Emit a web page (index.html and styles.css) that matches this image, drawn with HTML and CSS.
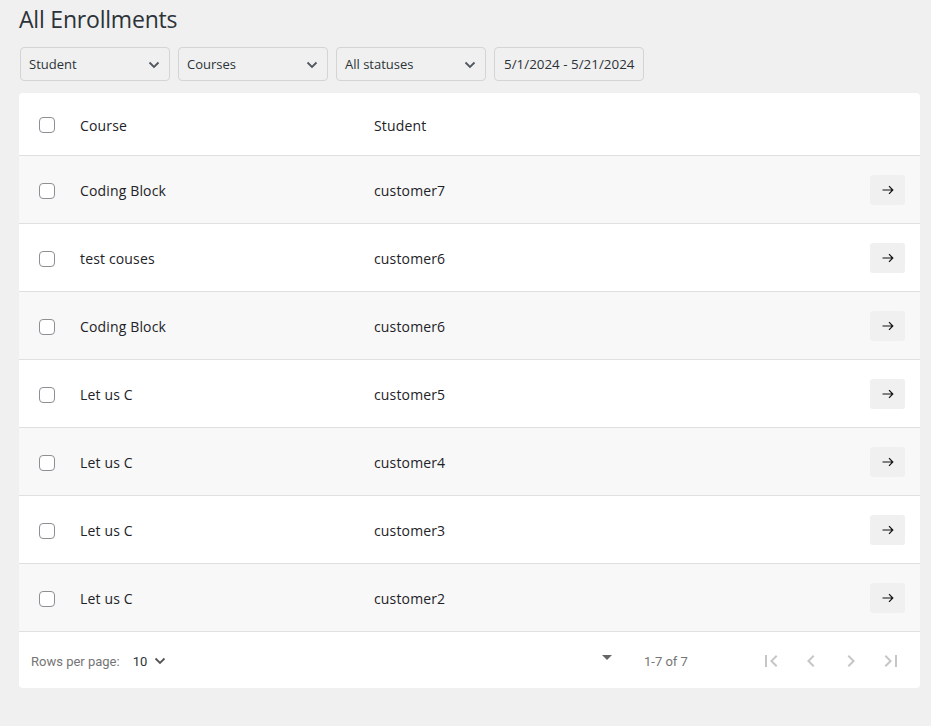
FILE: index.html
```html
<!DOCTYPE html>
<html lang="en">
<head>
<meta charset="utf-8">
<title>All Enrollments</title>
<link rel="stylesheet" href="styles.css">
</head>
<body>
<div class="wrap">
  <h1 class="title">All Enrollments</h1>
  <div class="filters">
    <div class="select"><span>Student</span><svg class="chev" width="12" height="8" viewBox="0 0 12 8"><path d="M1.5 1.5 6 6l4.5-4.5" fill="none" stroke="#50575e" stroke-width="1.8"/></svg></div>
    <div class="select"><span>Courses</span><svg class="chev" width="12" height="8" viewBox="0 0 12 8"><path d="M1.5 1.5 6 6l4.5-4.5" fill="none" stroke="#50575e" stroke-width="1.8"/></svg></div>
    <div class="select"><span>All statuses</span><svg class="chev" width="12" height="8" viewBox="0 0 12 8"><path d="M1.5 1.5 6 6l4.5-4.5" fill="none" stroke="#50575e" stroke-width="1.8"/></svg></div>
    <div class="select date"><span>5/1/2024 - 5/21/2024</span></div>
  </div>

  <div class="card">
    <div class="row head">
      <div class="cell cb"><span class="check"></span></div>
      <div class="cell course">Course</div>
      <div class="cell student">Student</div>
      <div class="cell act"></div>
    </div>
    <div class="row odd">
      <div class="cell cb"><span class="check"></span></div>
      <div class="cell course">Coding Block</div>
      <div class="cell student">customer7</div>
      <div class="cell act"><button class="go"><svg width="12" height="10" viewBox="0 0 12 10"><path d="M0.5 5h10.5M7 1.2 10.8 5 7 8.8" fill="none" stroke="#111" stroke-width="1.2"/></svg></button></div>
    </div>
    <div class="row">
      <div class="cell cb"><span class="check"></span></div>
      <div class="cell course">test couses</div>
      <div class="cell student">customer6</div>
      <div class="cell act"><button class="go"><svg width="12" height="10" viewBox="0 0 12 10"><path d="M0.5 5h10.5M7 1.2 10.8 5 7 8.8" fill="none" stroke="#111" stroke-width="1.2"/></svg></button></div>
    </div>
    <div class="row odd">
      <div class="cell cb"><span class="check"></span></div>
      <div class="cell course">Coding Block</div>
      <div class="cell student">customer6</div>
      <div class="cell act"><button class="go"><svg width="12" height="10" viewBox="0 0 12 10"><path d="M0.5 5h10.5M7 1.2 10.8 5 7 8.8" fill="none" stroke="#111" stroke-width="1.2"/></svg></button></div>
    </div>
    <div class="row">
      <div class="cell cb"><span class="check"></span></div>
      <div class="cell course">Let us C</div>
      <div class="cell student">customer5</div>
      <div class="cell act"><button class="go"><svg width="12" height="10" viewBox="0 0 12 10"><path d="M0.5 5h10.5M7 1.2 10.8 5 7 8.8" fill="none" stroke="#111" stroke-width="1.2"/></svg></button></div>
    </div>
    <div class="row odd">
      <div class="cell cb"><span class="check"></span></div>
      <div class="cell course">Let us C</div>
      <div class="cell student">customer4</div>
      <div class="cell act"><button class="go"><svg width="12" height="10" viewBox="0 0 12 10"><path d="M0.5 5h10.5M7 1.2 10.8 5 7 8.8" fill="none" stroke="#111" stroke-width="1.2"/></svg></button></div>
    </div>
    <div class="row">
      <div class="cell cb"><span class="check"></span></div>
      <div class="cell course">Let us C</div>
      <div class="cell student">customer3</div>
      <div class="cell act"><button class="go"><svg width="12" height="10" viewBox="0 0 12 10"><path d="M0.5 5h10.5M7 1.2 10.8 5 7 8.8" fill="none" stroke="#111" stroke-width="1.2"/></svg></button></div>
    </div>
    <div class="row odd">
      <div class="cell cb"><span class="check"></span></div>
      <div class="cell course">Let us C</div>
      <div class="cell student">customer2</div>
      <div class="cell act"><button class="go"><svg width="12" height="10" viewBox="0 0 12 10"><path d="M0.5 5h10.5M7 1.2 10.8 5 7 8.8" fill="none" stroke="#111" stroke-width="1.2"/></svg></button></div>
    </div>

    <div class="foot">
      <span class="rpp">Rows per page:</span>
      <span class="rpp-sel">10<svg width="12" height="8" viewBox="0 0 12 8"><path d="M1.5 1.5 6 6l4.5-4.5" fill="none" stroke="#555" stroke-width="1.8"/></svg></span>
      <span class="spacer"></span>
      <span class="tri"></span>
      <span class="range">1-7 of 7</span>
      <div class="pager">
        <span class="pbtn"><svg width="24" height="24" viewBox="0 0 24 24"><path d="M18.41 16.59 13.82 12l4.59-4.59L17 6l-6 6 6 6zM6 6h2v12H6z" fill="#c6c6c6"/></svg></span>
        <span class="pbtn"><svg width="24" height="24" viewBox="0 0 24 24"><path d="M15.41 7.41 14 6l-6 6 6 6 1.41-1.41L10.83 12z" fill="#c6c6c6"/></svg></span>
        <span class="pbtn"><svg width="24" height="24" viewBox="0 0 24 24"><path d="M10 6 8.59 7.41 13.17 12l-4.58 4.59L10 18l6-6z" fill="#c6c6c6"/></svg></span>
        <span class="pbtn"><svg width="24" height="24" viewBox="0 0 24 24"><path d="M5.59 7.41 10.18 12l-4.59 4.59L7 18l6-6-6-6zM16 6h2v12h-2z" fill="#c6c6c6"/></svg></span>
      </div>
    </div>
  </div>
</div>
</body>
</html>
```

FILE: styles.css
```css
* { box-sizing: border-box; }

html, body {
  margin: 0;
  padding: 0;
  background: #f0f0f0;
}

body {
  font-family: "Open Sans", "Noto Sans", sans-serif;
  color: #1d2327;
}

.wrap {
  padding: 4px 11px 0 19px;
}

.title {
  margin: 0;
  font-size: 23px;
  font-weight: 400;
  line-height: 30px;
  letter-spacing: -0.2px;
  color: #2c3338;
}

.filters {
  display: flex;
  gap: 8px;
  margin-top: 13px;
  padding-left: 1px;
}

.select {
  width: 150px;
  height: 34px;
  border: 1px solid #d4d4d4;
  border-radius: 4px;
  background: #f0f0f0;
  display: flex;
  align-items: center;
  justify-content: space-between;
  padding: 0 9px 0 8px;
  font-size: 13px;
  color: #2c3338;
}

.select .chev {
  margin-top: 1px;
}

.select.date {
  padding: 0 5px 0 9px;
  font-size: 13.4px;
}

.card {
  margin-top: 12px;
  background: #fff;
  border-radius: 4px;
  overflow: hidden;
}

.row {
  display: flex;
  align-items: center;
  height: 68px;
  padding-top: 2px;
  border-bottom: 1px solid #e0e0e0;
  font-size: 14px;
  letter-spacing: 0.15px;
  color: #1d2327;
}

.row.head {
  height: 63px;
}

.row.odd {
  background: #f8f8f8;
}

.cell.cb {
  width: 61px;
  padding-left: 20px;
  display: flex;
  align-items: center;
}

.check {
  display: block;
  width: 16px;
  height: 16px;
  border: 1px solid #8c8f94;
  border-radius: 4px;
  background: #fff;
}

.cell.course {
  width: 294px;
}

.cell.student {
  flex: 1;
}

.cell.act {
  width: 50px;
  padding-right: 15px;
  display: flex;
  justify-content: flex-end;
  margin-top: -2px;
}

.go {
  width: 35px;
  height: 30px;
  border: 0;
  border-radius: 3px;
  background: #f0f0f0;
  padding: 0;
  display: flex;
  align-items: center;
  justify-content: center;
}

.foot {
  height: 56px;
  display: flex;
  align-items: center;
  padding: 2px 9px 0 12px;
  font-family: Roboto, "Liberation Sans", sans-serif;
  font-size: 13px;
}

.rpp {
  color: #757575;
}

.rpp-sel {
  margin-left: 13px;
  display: flex;
  align-items: center;
  gap: 7px;
  color: #2c3338;
}

.spacer {
  flex: 1;
}

.tri {
  width: 0;
  height: 0;
  border-left: 5px solid transparent;
  border-right: 5px solid transparent;
  border-top: 5px solid #666;
  margin-top: -8px;
}

.range {
  margin-left: 32px;
  color: #757575;
  width: 107px;
}

.pager {
  display: flex;
}

.pbtn {
  width: 40px;
  height: 40px;
  display: flex;
  align-items: center;
  justify-content: center;
}
```
